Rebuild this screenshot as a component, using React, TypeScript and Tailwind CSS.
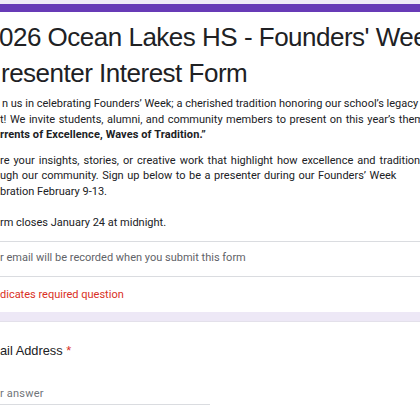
export default function App() {
  const roboto = { fontFamily: 'Roboto, "Liberation Sans", sans-serif' };
  return (
    <div className="w-[420px] h-[420px] overflow-hidden bg-white text-[#202124]">
      <div className="h-[4px] bg-[#efeaf7]" />
      <div className="h-[8px] bg-[#673ab7]" />
      <div
        className="mt-[7px] whitespace-nowrap text-[26px] leading-[36px] tracking-[-0.5px]"
        style={{ fontFamily: '"Liberation Sans", Arial, sans-serif' }}
      >
        <div className="-ml-[1px]">026 Ocean Lakes HS - Founders&apos; Week</div>
        <div className="ml-[1px]">resenter Interest Form</div>
      </div>
      <div className="mt-[5px] whitespace-nowrap text-[11px] leading-[15.5px]" style={roboto}>
        <div className="ml-[2px]">n us in celebrating Founders’ Week; a cherished tradition honoring our school’s legacy of</div>
        <div className="[word-spacing:0.8px]">t! We invite students, alumni, and community members to present on this year’s theme:</div>
        <div className="font-bold tracking-[0.1px]">rrents of Excellence, Waves of Tradition.”</div>
        <div className="mt-[10px] [word-spacing:1.3px]">re your insights, stories, or creative work that highlight how excellence and tradition flow</div>
        <div className="[word-spacing:0.8px]">ugh our community. Sign up below to be a presenter during our Founders’ Week</div>
        <div>bration February 9-13.</div>
        <div className="mt-[16px]">rm closes January 24 at midnight.</div>
      </div>
      <div className="mt-[10px] border-t border-[#dadce0]">
        <div className="h-[34px] flex items-center whitespace-nowrap text-[11px] text-[#5f6368]" style={roboto}>
          r email will be recorded when you submit this form
        </div>
      </div>
      <div className="border-t border-[#dadce0]">
        <div className="pt-[10px] h-[35px] whitespace-nowrap text-[11px] leading-[15.5px] text-[#d93025]" style={roboto}>
          dicates required question
        </div>
      </div>
      <div className="h-[10px] bg-[#ede8f6] border-b border-[#e3e0ea]" />
      <div className="pt-[20px]">
        <div
          className="whitespace-nowrap text-[12.8px] leading-[18px]"
          style={{ fontFamily: '"Liberation Sans", Arial, sans-serif' }}
        >
          ail Address <span className="text-[#d93025]">*</span>
        </div>
        <div className="mt-[26px] w-[210px] border-b border-[#dadce0] pb-[3px]">
          <div className="whitespace-nowrap text-[11px] leading-[15px] text-[#70757a] tracking-[0.2px]" style={roboto}>
            r answer
          </div>
        </div>
      </div>
    </div>
  );
}
